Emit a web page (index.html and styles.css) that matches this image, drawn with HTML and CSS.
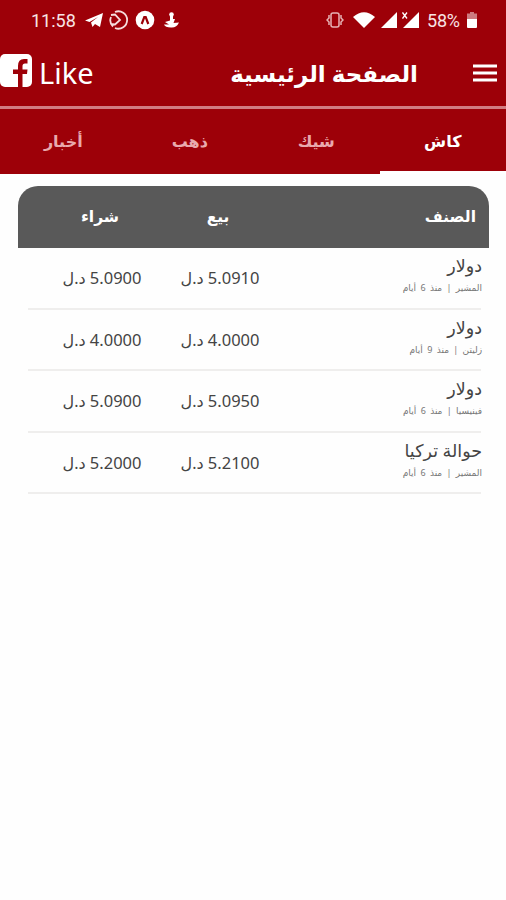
FILE: index.html
```html
<!doctype html>
<html lang="ar" dir="rtl">
<head>
    <meta charset="UTF-8">
    <meta name="viewport" content="width=device-width, initial-scale=1.0">
    <title>الصفحة الرئيسية</title>
    <link rel="stylesheet" href="styles.css">
</head>
<body>
<!-- Status bar -->
<div class="status-bar" dir="ltr">
    <div class="status-left">
        <span class="clock">11:58</span>
        <svg class="icon-telegram" width="18" height="16" viewBox="0 0 18 16"><path d="M0 8.500 L18 1 L15 15 L10 12 L7.500 15 L6 10.500 L13 5 L4.500 10 Z" fill="#fff"/></svg>
        <svg class="icon-sync" width="20" height="20" viewBox="0 0 20 20" fill="none" stroke="#f6dcdd" stroke-width="1.8"><path d="M6 2 A8.700 8.700 0 1 1 6 18 M4 16.500 A8.700 8.700 0 0 1 2 7 M2 5 L6 4.500 L11 10 L6 14.500 L2 14"/></svg>
        <svg class="icon-expo" width="20" height="20" viewBox="0 0 20 20"><circle cx="10" cy="10" r="9.300" fill="#fff"/><path d="M6.700 14 L9.300 7 H10.700 L13.300 14" fill="none" stroke="#9d0008" stroke-width="2.200"/></svg>
        <svg class="icon-anchor" width="15" height="16" viewBox="0 0 15 16" fill="#fff"><circle cx="7.500" cy="2.500" r="2.300"/><path d="M6 3 H9 V7 L11 7 L9.500 11 L15 10.500 Q12.500 16 7 15.500 Q1 15.500 0 12.500 L5 12.500 L1 10 L6 8.500 Z"/></svg>
    </div>
    <div class="status-right">
        <svg class="icon-vibrate" width="18" height="16" viewBox="0 0 18 16" fill="none" stroke="#e6b3b5" stroke-width="1.500"><rect x="5" y="1" width="8" height="14" rx="2"/><path d="M3 3 V6 L1 8 L3 10 V13 M15 3 V6 L17 8 L15 10 V13"/></svg>
        <svg class="icon-wifi" width="22" height="16" viewBox="0 0 22 16"><path d="M0 5 Q11 -4.500 22 5 L11 16 Z" fill="#fff"/></svg>
        <svg class="icon-signal" width="16" height="16" viewBox="0 0 16 16"><path d="M0 16 L16 0 V16 Z" fill="#fff"/></svg>
        <svg class="icon-signal-off" width="17" height="16" viewBox="0 0 17 16"><path d="M1 16 L17 0 V16 Z" fill="#fff"/><path d="M.500 .500 L5 6.500 M5 .500 L.500 6.500" stroke="#fff" stroke-width="1.300"/></svg>
        <span class="battery-level">58%</span>
        <svg class="icon-battery" width="10" height="16" viewBox="0 0 10 16"><path d="M3 0 H7 V1.500 H10 V7 H0 V1.500 H3 Z" fill="#cd7b80"/><path d="M0 7 H10 V15 Q10 16 9 16 H1 Q0 16 0 15 Z" fill="#fff"/></svg>
    </div>
</div>

<!-- App header -->
<header class="app-header">
    <svg class="icon-menu" width="24" height="18" viewBox="0 0 24 18" stroke="#fff" stroke-width="2.800"><path d="M0 2 H24 M0 9 H24 M0 16 H24"/></svg>
    <h1 class="title">الصفحة الرئيسية</h1>
    <div class="like" dir="ltr">
        <svg class="icon-facebook" width="32" height="33" viewBox="0 0 32 33"><rect width="32" height="33" rx="5" fill="#fff"/><path d="M18 33 V20 H13 V15.500 H18 V12 Q18 5 24 5 H27.500 V9.500 H25 Q22.500 9.500 22.500 12 V15.500 H27.500 L27 20 H22.500 V33 Z" fill="#9d0008"/></svg>
        <span>Like</span>
    </div>
</header>

<!-- Tabs -->
<nav class="tabs">
    <div class="tab active">كاش</div>
    <div class="tab">شيك</div>
    <div class="tab">ذهب</div>
    <div class="tab">أخبار</div>
</nav>

<!-- Prices -->
<main class="prices">
    <div class="price-head">
        <div>الصنف</div>
        <div class="center">بيع</div>
        <div class="center">شراء</div>
    </div>
    <div class="price-row">
        <div class="item">
            <div class="name">دولار</div>
            <div class="meta">المشير | منذ 6 أيام</div>
        </div>
        <div class="price">5.0910 <span class="currency">د.ل</span></div>
        <div class="price">5.0900 <span class="currency">د.ل</span></div>
    </div>
    <div class="price-row">
        <div class="item">
            <div class="name">دولار</div>
            <div class="meta">زليتن | منذ 9 أيام</div>
        </div>
        <div class="price">4.0000 <span class="currency">د.ل</span></div>
        <div class="price">4.0000 <span class="currency">د.ل</span></div>
    </div>
    <div class="price-row">
        <div class="item">
            <div class="name">دولار</div>
            <div class="meta">فينيسيا | منذ 6 أيام</div>
        </div>
        <div class="price">5.0950 <span class="currency">د.ل</span></div>
        <div class="price">5.0900 <span class="currency">د.ل</span></div>
    </div>
    <div class="price-row">
        <div class="item">
            <div class="name">حوالة تركيا</div>
            <div class="meta">المشير | منذ 6 أيام</div>
        </div>
        <div class="price">5.2100 <span class="currency">د.ل</span></div>
        <div class="price">5.2000 <span class="currency">د.ل</span></div>
    </div>
</main>
</body>
</html>
```
FILE: styles.css
```css
/* Global Styles */
* {
    box-sizing: border-box;
}

body {
    font-family: 'Noto Sans', 'DejaVu Sans', sans-serif;
    background: #fefefe;
    margin: 0;
    height: 900px;
    overflow: hidden;
    color: #444;
}

svg {
    display: block;
    flex: none;
}

/* Status bar */
.status-bar {
    display: flex;
    justify-content: space-between;
    height: 40px;
    padding: 0 29px 0 31px;
    background: #9d0008;
    color: #f8e4e5;
    font-family: Roboto, sans-serif;
    font-size: 18px;
}

.status-left,
.status-right {
    display: flex;
    align-items: center;
}

.clock {
    width: 54px;
}

.icon-telegram {
    margin-right: 6px;
}

.icon-sync {
    margin-right: 6px;
}

.icon-expo {
    margin-right: 9px;
}

.icon-vibrate {
    margin-right: 9px;
}

.icon-wifi {
    margin-right: 6px;
}

.icon-signal {
    margin-right: 5px;
}

.battery-level {
    width: 35px;
    margin: 0 5px 0 8px;
    letter-spacing: -0.2px;
}

/* Header */
.app-header {
    display: flex;
    align-items: center;
    height: 69px;
    padding: 0 9px 1px 0;
    background: #9d0008;
    border-bottom: 3px solid #d17c82;
    color: #fff;
}

.title {
    margin: 0 55px 0 0;
    font-size: 23px;
    line-height: 40px;
    white-space: nowrap;
}

.like {
    display: flex;
    align-items: center;
    gap: 7px;
    margin-right: auto;
    font-size: 29px;
    line-height: 40px;
}

.icon-facebook {
    margin-bottom: 4px;
}

/* Tabs */
.tabs {
    display: grid;
    grid-template-columns: repeat(4, 1fr);
    height: 65px;
    background: #9d0008;
}

.tab {
    display: flex;
    align-items: center;
    justify-content: center;
    padding-top: 2px;
    color: #e9a9ad;
    font-size: 16px;
    font-weight: bold;
    border-bottom: 3px solid transparent;
}

.tab.active {
    color: #fff;
    border-bottom-color: #fff;
}

/* Price table */
.prices {
    padding: 12px 17px 0 18px;
}

.price-head,
.price-row {
    display: grid;
    grid-template-columns: 1fr 118px 118px;
    align-items: center;
}

.price-head {
    height: 62px;
    padding: 0 13px 2px 23px;
    background: #595959;
    border-radius: 20px 20px 0 0;
    color: #fff;
    font-size: 15.5px;
    font-weight: bold;
}

.center {
    text-align: center;
}

.price-row {
    height: 61.5px;
    margin: 0 8px 0 10px;
    padding-left: 15px;
    border-bottom: 2px solid #efeeed;
}

.item {
    margin-right: -1px;
    padding-bottom: 4px;
    white-space: nowrap;
}

.name {
    font-size: 17.5px;
    line-height: 25px;
}

.meta {
    font-size: 9px;
    line-height: 20px;
    word-spacing: 2px;
    color: #777;
}

.price {
    text-align: center;
    font-size: 16.5px;
    white-space: nowrap;
}

.currency {
    font-size: 16px;
}
```
